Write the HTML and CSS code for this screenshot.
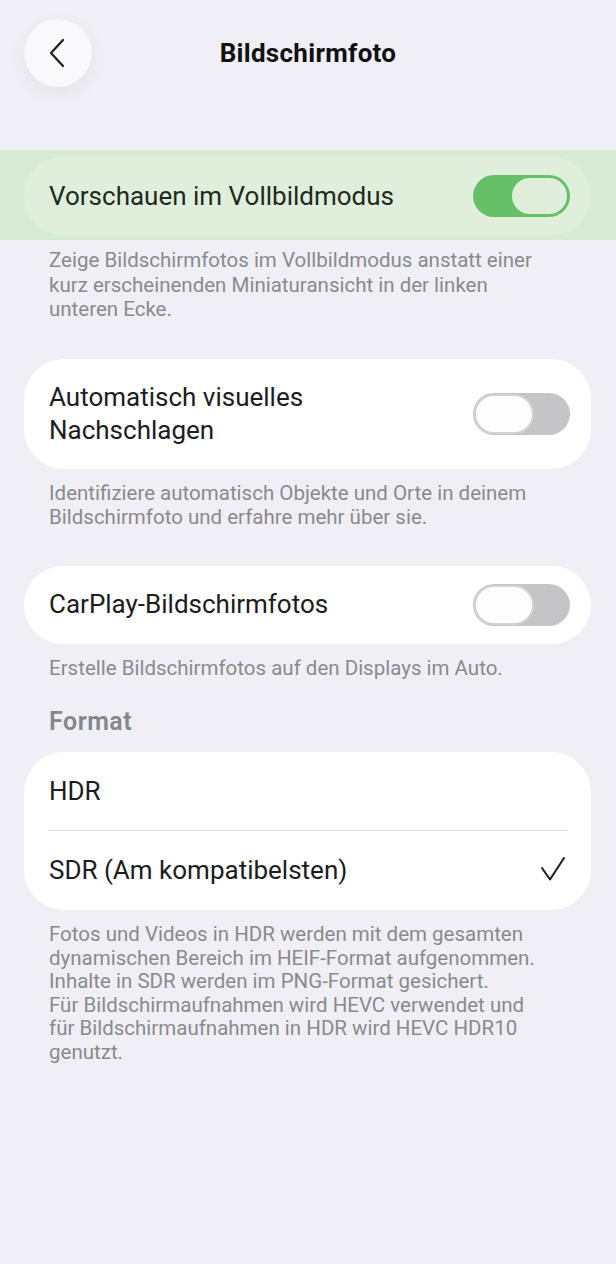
FILE: index.html
```html
<!DOCTYPE html>
<html lang="de">
<head>
	<meta charset="UTF-8">
	<meta name="viewport" content="width=device-width, initial-scale=1.0">
	<title>Bildschirmfoto</title>
	<link rel="stylesheet" href="styles.css">
</head>
<body>
	<header class="nav">
		<button class="back" aria-label="Zurück">
			<svg width="18" height="30" viewBox="0 0 18 30"><path d="M15 2 L3 15 L15 28" fill="none" stroke="#1c1c1e" stroke-width="2.2" stroke-linecap="round" stroke-linejoin="round"/></svg>
		</button>
		<h1>Bildschirmfoto</h1>
		<span></span>
	</header>

	<div class="band">
		<div class="card card-hl">
			<div class="row">
				<span class="label">Vorschauen im Vollbildmodus</span>
				<span class="switch on"><span class="knob"></span></span>
			</div>
		</div>
	</div>
	<p class="note first">Zeige Bildschirmfotos im Vollbildmodus anstatt einer<br>kurz erscheinenden Miniaturansicht in der linken<br>unteren Ecke.</p>

	<div class="group">
		<div class="card">
			<div class="row tall">
				<span class="label">Automatisch visuelles<br>Nachschlagen</span>
				<span class="switch"><span class="knob"></span></span>
			</div>
		</div>
	</div>
	<p class="note">Identifiziere automatisch Objekte und Orte in deinem<br>Bildschirmfoto und erfahre mehr über sie.</p>

	<div class="group">
		<div class="card">
			<div class="row">
				<span class="label">CarPlay-Bildschirmfotos</span>
				<span class="switch"><span class="knob"></span></span>
			</div>
		</div>
	</div>
	<p class="note short">Erstelle Bildschirmfotos auf den Displays im Auto.</p>

	<h2 class="section">Format</h2>
	<div class="group">
		<div class="card list">
			<div class="row item">
				<span class="label">HDR</span>
			</div>
			<div class="row item">
				<span class="label">SDR (Am kompatibelsten)</span>
				<svg class="check" width="24" height="24" viewBox="0 0 24 24"><path d="M1 11 L9 22.5 L23 1" fill="none" stroke="#1c1c1e" stroke-width="2" stroke-linecap="round" stroke-linejoin="round"/></svg>
			</div>
		</div>
	</div>
	<p class="note last">Fotos und Videos in HDR werden mit dem gesamten<br>dynamischen Bereich im HEIF-Format aufgenommen.<br>Inhalte in SDR werden im PNG-Format gesichert.<br>Für Bildschirmaufnahmen wird HEVC verwendet und<br>für Bildschirmaufnahmen in HDR wird HEVC HDR10<br>genutzt.</p>
</body>
</html>
```

FILE: styles.css
```css
*{margin:0;padding:0;box-sizing:border-box;}
body{background:#f0eff5;font-family:Roboto, "Liberation Sans", sans-serif;color:#1c1c1e;width:616px;min-height:1264px;}

.nav{display:grid;grid-template-columns:1fr auto 1fr;align-items:center;padding:19px 24px 0;height:150px;align-content:start;}
.back{width:68px;height:68px;border-radius:50%;border:none;background:#f9f9fb;box-shadow:0 6px 20px rgba(0,0,0,0.05);display:flex;align-items:center;justify-content:center;padding-right:2px;}
.nav h1{font-size:26px;font-weight:700;color:#111;letter-spacing:0.3px;}

.band{background:#d8ecd5;padding:7px 25px 5px 24px;}
.group{padding:0 25px 0 24px;}
.card{background:#fff;border-radius:40px;}
.card-hl{background:#dfefdc;}

.row{display:flex;align-items:center;justify-content:space-between;height:78px;padding:0 21px 0 25px;}
.row.tall{height:110px;}
.label{font-size:26px;line-height:33px;color:#1c1c1e;}
.card-hl .label{color:#1f2a1f;}

.switch{position:relative;width:97px;height:42px;border-radius:21px;background:#c5c5c7;flex-shrink:0;}
.switch .knob{position:absolute;left:1px;top:1px;width:60px;height:40px;border-radius:20px;background:#fdfdfd;border:2px solid #d2d2d4;}
.switch.on{background:#66c067;}
.switch.on .knob{left:37px;width:59px;background:#dfefdc;border-color:#66c067;}

.note{font-size:20.5px;line-height:24.5px;color:#8a8a8e;padding:0 20px 0 49px;margin:12px 0 36px;}
.note.first{margin-top:8px;margin-bottom:37px;}
.note.short{margin-bottom:27px;}
.note.last{line-height:23.5px;margin-top:13px;}
.section{font-size:25px;font-weight:600;color:#86868b;letter-spacing:0.5px;padding-left:49px;margin:0 0 16px;}

.list .item{height:78px;}
.list .item + .item{height:80px;border-top:1px solid #e2e2e6;margin-left:24px;padding-left:1px;margin-right:23px;padding-right:3px;}
.list .item:first-child{padding-left:25px;}
.check{margin-top:-4px;}
```
